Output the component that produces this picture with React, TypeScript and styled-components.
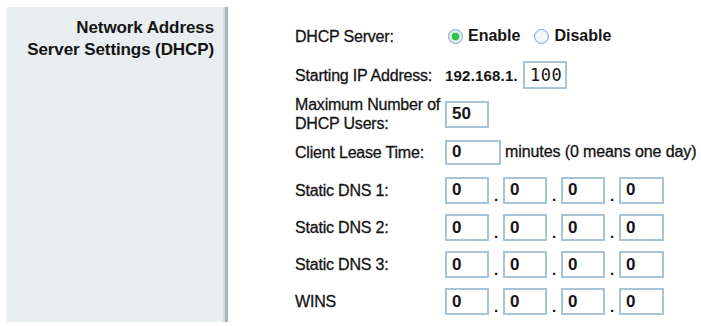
import React from "react";
import styled, { createGlobalStyle } from "styled-components";

const Global = createGlobalStyle`
  html, body { margin: 0; padding: 0; background: #ffffff; }
  body { font-family: "Liberation Sans", Arial, sans-serif; color: #111; }
`;

const Page = styled.div`
  display: flex;
  width: 701px;
  height: 326px;
  padding: 7px 0 4px 6px;
  box-sizing: border-box;
`;

const Sidebar = styled.div`
  width: 222px;
  background: #e9eef0;
  border-right: 3px solid #a9b4b7;
  box-shadow: inset 1px 0 0 #f4f7f8, inset -2px 0 0 #d3dcdf;
  padding: 10px 11px 0 0;
  box-sizing: border-box;
  text-align: right;
`;

const Title = styled.div`
  font-weight: 700;
  font-size: 17px;
  line-height: 22px;
  letter-spacing: -0.1px;
  color: #151515;
`;

const Form = styled.div`
  display: grid;
  grid-template-columns: 150px auto;
  grid-template-rows: 38px 40px 38px 38px 38px 37px 37px 37px;
  padding: 10px 0 0 67px;
  align-items: center;
`;

const Label = styled.div`
  font-size: 16px;
  line-height: 19px;
  letter-spacing: -0.2px;
  color: #141414;
  -webkit-text-stroke: 0.3px #141414;
`;

const Value = styled.div`
  display: flex;
  align-items: center;
`;

const Bold = styled.span`
  font-weight: 700;
  font-size: 15px;
  letter-spacing: 0.2px;
  color: #151515;
  margin-right: 5px;
`;

const Box = styled.div<{ $w: number; $h: number }>`
  width: ${(p) => p.$w}px;
  height: ${(p) => p.$h}px;
  box-sizing: border-box;
  border: 2px solid #a7c4d8;
  background: #fff;
  display: flex;
  align-items: center;
  padding-left: 5px;
  font-weight: 700;
  font-size: 17px;
  color: #151515;
`;

const Mono = styled.span`
  font-family: "DejaVu Sans Mono", monospace;
  font-size: 17px;
  font-weight: 400;
  letter-spacing: 0.5px;
`;

const Dot = styled.span`
  width: 14px;
  align-self: flex-end;
  text-align: center;
  font-weight: 700;
  font-size: 15px;
  line-height: 15px;
  padding-bottom: 1px;
`;

const Note = styled.span`
  font-size: 16px;
  letter-spacing: -0.1px;
  margin-left: 4px;
  -webkit-text-stroke: 0.3px #141414;
`;

const Radio = styled.span<{ $on?: boolean }>`
  width: 15px;
  height: 15px;
  box-sizing: border-box;
  border-radius: 50%;
  border: 1px solid #7ea4c4;
  background: ${(p) =>
    p.$on
      ? "radial-gradient(circle, #32c24a 0 3.5px, #c9ecc9 4px, #e6eef6 5.5px)"
      : "#f4f6f9"};
  box-shadow: inset 0 0 1px #c9d8e6;
  margin-right: 5px;
  &:first-child {
    margin-left: 3px;
  }
`;

const RadioText = styled.span`
  font-weight: 700;
  font-size: 16px;
  margin-right: 14px;
  color: #151515;
`;

const IpBoxes: React.FC = () => (
  <Value>
    <Box $w={44} $h={27}>0</Box>
    <Dot>.</Dot>
    <Box $w={44} $h={27}>0</Box>
    <Dot>.</Dot>
    <Box $w={44} $h={27}>0</Box>
    <Dot>.</Dot>
    <Box $w={45} $h={27}>0</Box>
  </Value>
);

export default function App() {
  return (
    <>
      <Global />
      <Page>
        <Sidebar>
          <Title>Network Address</Title>
          <Title>Server Settings (DHCP)</Title>
        </Sidebar>
        <Form>
          <Label>DHCP Server:</Label>
          <Value>
            <Radio $on />
            <RadioText>Enable</RadioText>
            <Radio />
            <RadioText>Disable</RadioText>
          </Value>

          <Label>Starting IP Address:</Label>
          <Value>
            <Bold>192.168.1.</Bold>
            <Box $w={44} $h={28}><Mono>100</Mono></Box>
          </Value>

          <Label>Maximum Number of<br />DHCP Users:</Label>
          <Value>
            <Box $w={44} $h={27}>50</Box>
          </Value>

          <Label>Client Lease Time:</Label>
          <Value>
            <Box $w={56} $h={25}>0</Box>
            <Note>minutes (0 means one day)</Note>
          </Value>

          <Label>Static DNS 1:</Label>
          <IpBoxes />
          <Label>Static DNS 2:</Label>
          <IpBoxes />
          <Label>Static DNS 3:</Label>
          <IpBoxes />
          <Label>WINS</Label>
          <IpBoxes />
        </Form>
      </Page>
    </>
  );
}
